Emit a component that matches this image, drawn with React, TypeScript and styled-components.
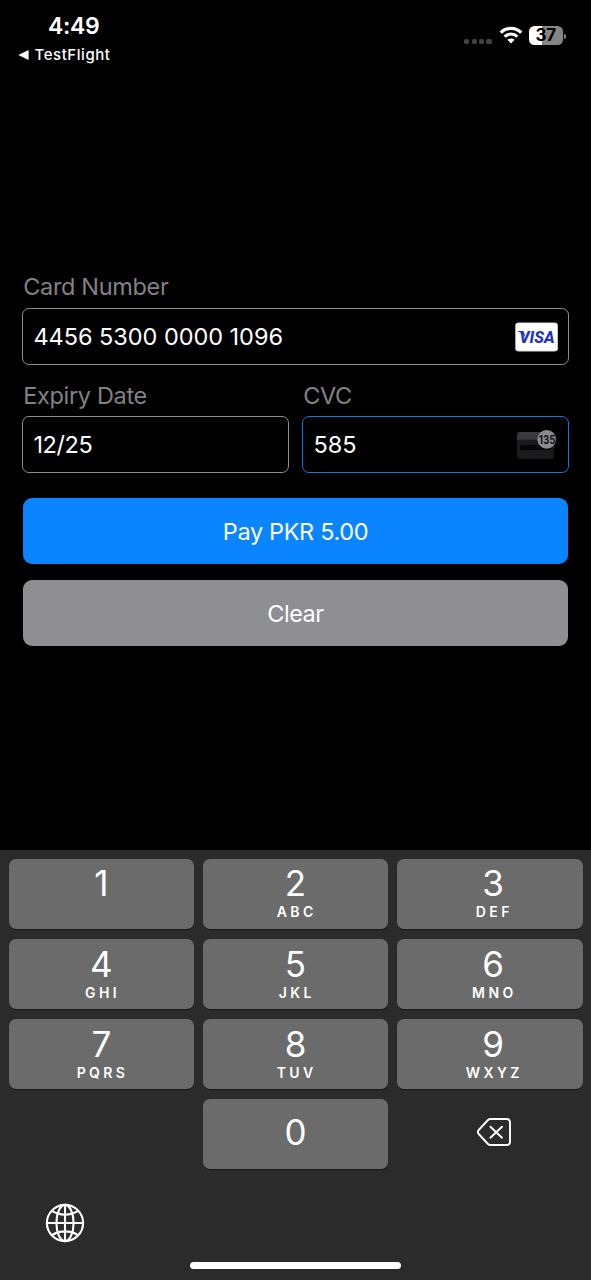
import React from "react";
import styled, { createGlobalStyle } from "styled-components";

const GlobalStyle = createGlobalStyle`
  *, *::before, *::after { box-sizing: border-box; }
  body {
    margin: 0;
    background: #000;
    font-family: Inter, "Liberation Sans", sans-serif;
    color: #fff;
  }
`;

const Screen = styled.div`
  width: 591px;
  height: 1280px;
  display: flex;
  flex-direction: column;
  background: #000;
  overflow: hidden;
`;

const StatusBar = styled.header`
  height: 272px;
  flex: none;
  display: flex;
  justify-content: space-between;
  align-items: flex-start;
  padding: 0 25px 0 18px;
`;

const StatusLeft = styled.div`
  display: flex;
  flex-direction: column;
  padding-top: 12px;
`;

const Time = styled.div`
  padding-left: 30px;
  font-size: 23px;
  font-weight: 600;
  line-height: 29px;
  letter-spacing: -0.3px;
`;

const BackLink = styled.div`
  display: flex;
  align-items: center;
  gap: 5.5px;
  padding-top: 3px;
  font-size: 15px;
  font-weight: 450;
  line-height: 21px;
  letter-spacing: 0.55px;
`;

const StatusRight = styled.div`
  display: flex;
  align-items: flex-start;
  padding-top: 25px;
`;

const Dots = styled.div`
  display: flex;
  gap: 2.2px;
  margin: 13.5px 7px 0 0;
`;

const Dot = styled.i`
  width: 5.2px;
  height: 5.2px;
  border-radius: 1.7px;
  background: #424242;
`;

const Battery = styled.div`
  width: 34.5px;
  height: 19px;
  margin: 1px 0 0 6px;
  border-radius: 5.5px;
  background: linear-gradient(90deg, #fff 37%, #858585 37%);
  color: #000;
  font-size: 17px;
  font-weight: 650;
  line-height: 19.5px;
  letter-spacing: -0.3px;
  text-align: center;
`;

const BatteryCap = styled.i`
  width: 2px;
  height: 5px;
  margin: 8.5px 0 0 1px;
  border-radius: 0 2px 2px 0;
  background: #8a8a8a;
`;

const Form = styled.main`
  flex: 1;
  padding: 0 22px;
`;

const FieldRow = styled.div`
  display: grid;
  grid-template-columns: 1fr 1fr;
  gap: 13px;
  padding-top: 16px;
`;

const Field = styled.label<{ $labelHeight: number }>`
  display: flex;
  flex-direction: column;

  > span {
    height: ${(p) => p.$labelHeight}px;
    padding-left: 1.2px;
    font-size: 23.5px;
    line-height: 29px;
    letter-spacing: -0.33px;
    color: #828286;
  }
`;

const FieldBox = styled.div<{ $active?: boolean }>`
  height: 57px;
  display: flex;
  align-items: center;
  justify-content: space-between;
  padding: 0 10px;
  border: 1.4px solid ${(p) => (p.$active ? "#1677d8" : "#8e8e92")};
  border-radius: 7px;
`;

const Value = styled.div<{ $spacing?: number }>`
  padding-left: 0.4px;
  font-size: 23.5px;
  line-height: 29px;
  letter-spacing: ${(p) => p.$spacing ?? 0}px;
`;

const Actions = styled.div`
  display: flex;
  flex-direction: column;
  gap: 16px;
  padding: 25px 1px 0;
`;

const ActionButton = styled.button<{ $color: string; $spacing: number }>`
  height: 66px;
  border: 0;
  padding: 1px 0 0;
  border-radius: 9px;
  background: ${(p) => p.$color};
  color: #fff;
  font: 400 23.5px/65px Inter, "Liberation Sans", sans-serif;
  letter-spacing: ${(p) => p.$spacing}px;
`;

const Keyboard = styled.section`
  flex: none;
  height: 430px;
  display: flex;
  flex-direction: column;
  padding: 9px 8.5px 0 8.5px;
  background: #2b2b2b;
`;

const Keys = styled.div`
  display: grid;
  grid-template-columns: repeat(3, 1fr);
  grid-auto-rows: 70px;
  gap: 10px 8.5px;
`;

const Key = styled.div<{ $top: number; $left?: number }>`
  display: flex;
  flex-direction: column;
  align-items: center;
  padding-top: ${(p) => p.$top}px;
  padding-left: ${(p) => p.$left ?? 0}px;
  border-radius: 7px;
  background: #6b6b6b;
  box-shadow: 0 1px 0.5px #171717;
`;

const Digit = styled.div`
  font-size: 35px;
  line-height: 40px;
  height: 41px;
`;

const Letters = styled.div`
  font-size: 14px;
  font-weight: 600;
  line-height: 16px;
  letter-spacing: 3.4px;
  margin-right: -2.4px;
`;

const IconKey = styled.div`
  display: flex;
  align-items: center;
  justify-content: center;
  padding: 0 0 4px 8px;
`;

const KeyboardFooter = styled.div`
  display: flex;
  padding: 34px 0 0 36.5px;
`;

const HomeIndicator = styled.div`
  width: 211px;
  height: 7.5px;
  margin: 18.5px auto 0;
  border-radius: 4px;
  background: #fff;
`;

const WifiIcon = () => (
  <svg width="24" height="20" viewBox="0 0 24 20" fill="none" stroke="#fff">
    <path d="M1.700 7.600C7.500 1.900 16.500 1.900 22.300 7.600" strokeWidth="3.3" />
    <path d="M5.600 11.700C9.300 8.200 14.700 8.200 18.400 11.700" strokeWidth="3" />
    <path d="M8.400 14.800c2-1.800 5.200-1.800 7.200 0L12 18.500z" fill="#fff" stroke="none" />
  </svg>
);

const VisaCard = () => (
  <svg width="43" height="30" viewBox="0 0 43 30">
    <rect x="0.4" y="0.8" width="42.4" height="28.4" rx="3" fill="#fff" stroke="#bbb" strokeWidth="0.5" />
    <path d="M2.700 9.100h4.500c1.100 0 1.700.6 2 1.600l1.200 5C8.700 12.400 6.100 10.300 2.700 9.500z" fill="#1c35bd" />
    <text
      x="4.2"
      y="20.700"
      fontFamily="Roboto, sans-serif"
      fontSize="16.3"
      fontWeight="800"
      fontStyle="italic"
      fill="#1c35bd"
      textLength="35.4"
      lengthAdjust="spacingAndGlyphs"
    >
      VISA
    </text>
  </svg>
);

const CvcCard = () => (
  <svg width="43" height="30" viewBox="0 0 43 30">
    <rect x="2" y="2" width="37" height="27" rx="3" fill="#1a1a1c" />
    <path d="M2 9.700V5a3 3 0 0 1 3-3h31a3 3 0 0 1 3 3v4.700z" fill="#39393b" />
    <rect x="5" y="15" width="31" height="5" rx="1.5" fill="#050506" />
    <circle cx="31.700" cy="9.400" r="9.300" fill="#8b8b90" />
    <text
      x="23.800"
      y="13.500"
      fontFamily="Inter, sans-serif"
      fontSize="11.5"
      fontWeight="700"
      fill="#141416"
      textLength="16.6"
      lengthAdjust="spacingAndGlyphs"
    >
      135
    </text>
  </svg>
);

const DeleteIcon = () => (
  <svg width="36" height="30" viewBox="0 0 36 30" fill="none" stroke="#fff" strokeWidth="1.9" strokeLinecap="round" strokeLinejoin="round">
    <path d="M14.400 2H30.500Q34 2 34 5.500V24.500Q34 28 30.500 28H14.400Q13 28 12 27L2.700 17Q1 15 2.700 13L12 3Q13 2 14.400 2z" />
    <path d="M14.400 9.700l11.600 11M26 9.700L14.400 20.700" />
  </svg>
);

const GlobeIcon = () => (
  <svg width="40" height="40" viewBox="0 0 40 40" fill="none" stroke="#fff" strokeWidth="2.1">
    <circle cx="20" cy="20" r="18.100" />
    <ellipse cx="20" cy="20" rx="8.600" ry="18.100" />
    <path d="M20 1.800v36.400M1.800 20h36.400M6.700 7.700c7.600 5.300 19 5.300 26.600 0M6.700 32.300c7.600-5.300 19-5.300 26.600 0" />
  </svg>
);

const KEYS: { digit: string; letters: string; top: number; left: number }[] = [
  { digit: "1", letters: "", top: 4, left: 0 },
  { digit: "2", letters: "ABC", top: 4, left: 0 },
  { digit: "3", letters: "DEF", top: 4, left: 7 },
  { digit: "4", letters: "GHI", top: 5, left: 0 },
  { digit: "5", letters: "JKL", top: 5, left: 0 },
  { digit: "6", letters: "MNO", top: 5, left: 7 },
  { digit: "7", letters: "PQRS", top: 5, left: 0 },
  { digit: "8", letters: "TUV", top: 5, left: 0 },
  { digit: "9", letters: "WXYZ", top: 5, left: 7 },
];

export default function App() {
  return (
    <>
      <GlobalStyle />
      <Screen>
        <StatusBar>
          <StatusLeft>
            <Time>4:49</Time>
            <BackLink>
              <svg width="11" height="10" viewBox="0 0 11 10">
                <path d="M0.300 5L10.600 0v10z" fill="#fff" />
              </svg>
              TestFlight
            </BackLink>
          </StatusLeft>
          <StatusRight>
            <Dots>
              <Dot />
              <Dot />
              <Dot />
              <Dot />
            </Dots>
            <WifiIcon />
            <Battery>37</Battery>
            <BatteryCap />
          </StatusRight>
        </StatusBar>

        <Form>
          <Field $labelHeight={36}>
            <span>Card Number</span>
            <FieldBox>
              <Value $spacing={-0.04}>4456 5300 0000 1096</Value>
              <VisaCard />
            </FieldBox>
          </Field>
          <FieldRow>
            <Field $labelHeight={35}>
              <span>Expiry Date</span>
              <FieldBox>
                <Value $spacing={-0.4}>12/25</Value>
              </FieldBox>
            </Field>
            <Field $labelHeight={35}>
              <span>CVC</span>
              <FieldBox $active>
                <Value>585</Value>
                <CvcCard />
              </FieldBox>
            </Field>
          </FieldRow>
          <Actions>
            <ActionButton $color="#0a84ff" $spacing={-0.35}>Pay PKR 5.00</ActionButton>
            <ActionButton $color="#8e8e93" $spacing={-0.5}>Clear</ActionButton>
          </Actions>
        </Form>

        <Keyboard>
          <Keys>
            {KEYS.map((k) => (
              <Key key={k.digit} $top={k.top} $left={k.left}>
                <Digit>{k.digit}</Digit>
                <Letters>{k.letters}</Letters>
              </Key>
            ))}
            <div />
            <Key $top={13}>
              <Digit>0</Digit>
            </Key>
            <IconKey>
              <DeleteIcon />
            </IconKey>
          </Keys>
          <KeyboardFooter>
            <GlobeIcon />
          </KeyboardFooter>
          <HomeIndicator />
        </Keyboard>
      </Screen>
    </>
  );
}
